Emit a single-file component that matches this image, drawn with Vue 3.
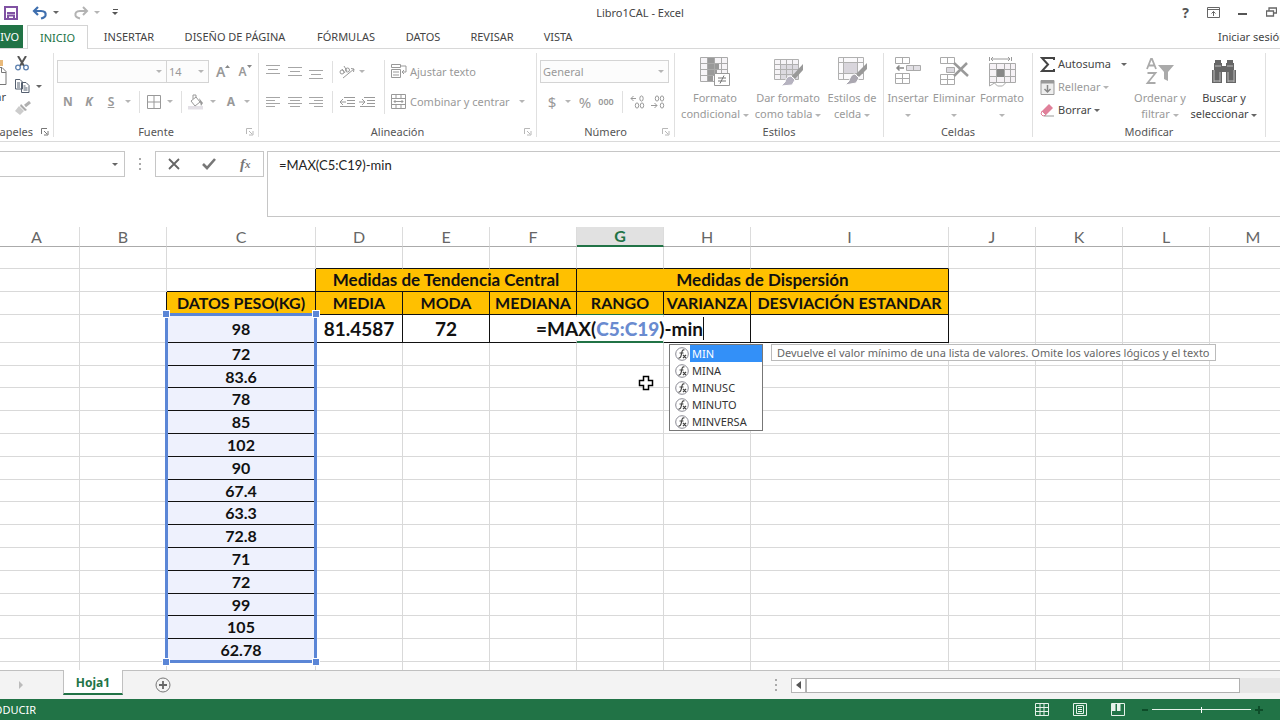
<script setup>
const menuTabs = ['INSERTAR', 'DISEÑO DE PÁGINA', 'FÓRMULAS', 'DATOS', 'REVISAR', 'VISTA']
const columns = ['A', 'B', 'C', 'D', 'E', 'F', 'G', 'H', 'I', 'J', 'K', 'L', 'M']
const weights = ['72', '83.6', '78', '85', '102', '90', '67.4', '63.3', '72.8', '71', '72', '99', '105', '62.78']
const suggestions = ['MIN', 'MINA', 'MINUSC', 'MINUTO', 'MINVERSA']
const vertical = [
  { label: 'Alinear arriba', d: 'M0 1.5h14M2 5.5h10M0 9.5h14' },
  { label: 'Alinear en el medio', d: 'M0 3.5h14M2 7.5h10M0 11.5h14' },
  { label: 'Alinear abajo', d: 'M0 6.5h14M2 10.5h10M0 14.5h14' }
]
const horizontal = [
  { label: 'Alinear a la izquierda', d: 'M0 2.5h14M0 5.5h9M0 8.5h14M0 11.5h9' },
  { label: 'Centrar', d: 'M0 2.5h14M2 5.5h10M0 8.5h14M2 11.5h10' },
  { label: 'Alinear a la derecha', d: 'M0 2.5h14M5 5.5h9M0 8.5h14M5 11.5h9' }
]
</script>

<template>
  <div class="app">
    <header class="title">
      <div class="quick">
        <button aria-label="Guardar"><svg width="14" height="14" viewBox="0 0 14 14"><path d="M1 1h12v12H1z" fill="#fff" stroke="#8052a3" stroke-width="2" /><path d="M3 7h8M4 13V9.500h6V13" fill="none" stroke="#8052a3" stroke-width="2" /></svg></button>
        <button aria-label="Deshacer"><svg width="16" height="14" viewBox="0 0 16 14"><path d="M6 1 2 5l4 4M2.500 5H9c4 0 5 2 4.500 4.500C13 11.500 11 12 9 12.500" fill="none" stroke="#3f6fae" stroke-width="2.200" /></svg></button>
        <i class="caret dark"></i>
        <button aria-label="Rehacer" class="redo"><svg width="16" height="14" viewBox="0 0 16 14"><path d="m10 1 4 4-4 4M13.500 5H7C3 5 2 7 2.500 9.500 3 11.500 5 12 7 12.500" fill="none" stroke="#b3b3b3" stroke-width="2" /></svg></button>
        <i class="caret"></i>
        <button aria-label="Personalizar barra" class="custom"><svg width="7" height="7" viewBox="0 0 7 7"><path d="M1 .5h5" stroke="#555" /><path d="M0 3h6L3 6z" fill="#555" /></svg></button>
      </div>
      <h1>Libro1CAL - Excel</h1>
      <div class="window">
        <button aria-label="Ayuda" class="help">?</button>
        <button aria-label="Opciones de cinta"><svg width="13" height="11" viewBox="0 0 13 11"><path d="M.5.500h12v10H.5zM.5 2.500h12M6.500 9V4.500M4.500 6.500l2-2 2 2" fill="none" stroke="#666" /></svg></button>
        <button aria-label="Minimizar"><svg width="10" height="11" viewBox="0 0 10 11"><path d="M0 7h9" stroke="#555" stroke-width="2" /></svg></button>
        <button aria-label="Restaurar"><svg width="11" height="11" viewBox="0 0 11 11"><path d="M.5 4h7v5h-7zM3 4V1h7.500v5H7.500" fill="none" stroke="#666" stroke-width="1.300" /></svg></button>
      </div>
    </header>

    <nav class="tabs">
      <button class="file">ARCHIVO</button>
      <button class="active">INICIO</button>
      <div class="others"><button v-for="t in menuTabs" :key="t">{{ t }}</button></div>
      <a href="#" class="login">Iniciar sesión</a>
    </nav>

    <section class="ribbon">
      <div class="group clip">
        <div class="body">
          <button class="paste"><svg width="7" height="28" viewBox="0 0 7 28"><path d="M0 1h3v6H0z" fill="#e8b97a" /><path d="M0 8.500h2l4 4v13H0M1.500 9v4.500H6" fill="none" stroke="#777" /></svg><span>Pegar</span></button>
          <div class="clipside">
            <button aria-label="Cortar"><svg width="14" height="15" viewBox="0 0 14 15"><path d="m3 0 6 10M11 0 5 10" stroke="#555" stroke-width="2" /><circle cx="3" cy="11.500" r="2.300" fill="none" stroke="#5b7fae" stroke-width="1.300" /><circle cx="11" cy="11.500" r="2.300" fill="none" stroke="#5b7fae" stroke-width="1.300" /></svg></button>
            <button aria-label="Copiar"><svg width="15" height="14" viewBox="0 0 15 14"><path d="M.5.500H5L7.500 3v7h-7zM2 4h3M2 6h3M2 8h3M6.500 3.500H11l3 3v7H6.500zM8.500 7h2M8.500 9h4M8.500 11h4" fill="#fff" stroke="#556070" /></svg><i class="caret dark"></i></button>
            <button aria-label="Copiar formato"><svg width="16" height="14" viewBox="0 0 16 14"><path d="m15 1-5 4" stroke="#b0b0b0" stroke-width="3" /><path d="m6 3 6 6-2 1-5-5z" fill="#aaa" /><path d="m4 5 5 5-4 4-5-4z" fill="#ccc" /></svg></button>
          </div>
        </div>
        <div class="label">Portapapeles<svg class="launch strong" width="8" height="8" viewBox="0 0 8 8"><path d="M.5 6V.5H6M3 3l3 3M7 3v4H3" fill="none" stroke="currentColor" /></svg></div>
      </div>

      <div class="group font">
        <div class="body rows">
          <div class="row combos">
            <button class="combo" aria-label="Fuente"><span></span><i class="caret"></i></button>
            <button class="combo size" aria-label="Tamaño de fuente"><span>14</span><i class="caret"></i></button>
            <button class="grow" aria-label="Aumentar tamaño">A<svg width="5" height="4" viewBox="0 0 5 4"><path d="M0 3h5L2.500 0z" fill="#888" /></svg></button>
            <button class="grow less" aria-label="Disminuir tamaño">A<svg width="5" height="4" viewBox="0 0 5 4"><path d="M0 0h5L2.500 3z" fill="#888" /></svg></button>
          </div>
          <div class="row fontgrid">
            <button class="b">N</button><button class="b it">K</button><button class="b un">S</button><i class="caret"></i><i class="div"></i>
            <button aria-label="Bordes"><svg width="14" height="14" viewBox="0 0 14 14"><path d="M.5.500h13v13H.5zM7 1v12M1 7h12" fill="none" stroke="#999" /></svg></button><i class="caret"></i><i class="div"></i>
            <button aria-label="Relleno"><svg width="16" height="16" viewBox="0 0 16 16"><path d="M0 12h15v3.500H0z" fill="#e3e0e6" /><path d="m3 7 5-4 4 5-5 4zM5 5V1h3v3" fill="#fff" stroke="#999" /><path d="m11 4 4 5-2 3-1-4z" fill="#999" /></svg></button><i class="caret"></i>
            <button class="b">A</button><i class="caret"></i>
          </div>
        </div>
        <div class="label">Fuente<svg class="launch" width="8" height="8" viewBox="0 0 8 8"><path d="M.5 6V.5H6M3 3l3 3M7 3v4H3" fill="none" stroke="currentColor" /></svg></div>
      </div>

      <div class="group align">
        <div class="body">
          <div class="rows">
            <div class="row aligngrid">
              <button v-for="v in vertical" :key="v.label" :aria-label="v.label"><svg width="14" height="16" viewBox="0 0 14 16"><path :d="v.d" stroke="#a6a6a6" /></svg></button>
              <i class="div"></i>
              <button aria-label="Orientación"><svg width="16" height="14" viewBox="0 0 16 14"><g fill="none" stroke="#999"><circle cx="3" cy="7" r="2" /><path d="m3 4 3 4" /><circle cx="8.500" cy="5" r="2" /><path d="m5 1 3 5M4 13 15 4M12 3.500l3 .5-.5 3" /></g></svg></button>
              <i class="caret"></i>
            </div>
            <div class="row aligngrid">
              <button v-for="h in horizontal" :key="h.label" :aria-label="h.label"><svg width="14" height="14" viewBox="0 0 14 14"><path :d="h.d" stroke="#a6a6a6" /></svg></button>
              <i class="div"></i>
              <button aria-label="Disminuir sangría"><svg width="16" height="12" viewBox="0 0 16 12"><path d="M5 1.500h11M8 4.500h8M8 7.500h8M1 10.500h15M1 6h6M4 3 1 6l3 3" fill="none" stroke="#999" /></svg></button>
              <button aria-label="Aumentar sangría"><svg width="16" height="12" viewBox="0 0 16 12"><path d="M5 1.500h11M8 4.500h8M8 7.500h8M1 10.500h15M0 6h6M3 3l3 3-3 3" fill="none" stroke="#999" /></svg></button>
            </div>
          </div>
          <i class="div tall"></i>
          <div class="rows">
            <div class="row"><button class="wide"><svg width="16" height="15" viewBox="0 0 16 15"><path d="M.5.500h9v3h-9zM.5 5.500h9v8h-9zM2 8h6M2 11h6M10 2h5v6h-4M13 6l-2 2 2 2" fill="none" stroke="#999" /></svg>Ajustar texto</button></div>
            <div class="row"><button class="wide"><svg width="16" height="15" viewBox="0 0 16 15"><path d="M.5.500h14v14H.5zM1 4.500h13M1 10.500h13M5 1v3M10 1v3M5 11v3M10 11v3M3 7.500h9M4.500 6 3 7.500 4.500 9M10.500 6 12 7.500 10.500 9" fill="none" stroke="#999" /></svg>Combinar y centrar</button><i class="caret merge"></i></div>
          </div>
        </div>
        <div class="label">Alineación<svg class="launch" width="8" height="8" viewBox="0 0 8 8"><path d="M.5 6V.5H6M3 3l3 3M7 3v4H3" fill="none" stroke="currentColor" /></svg></div>
      </div>

      <div class="group number">
        <div class="body rows">
          <div class="row"><button class="combo general" aria-label="Formato de número"><span>General</span><i class="caret"></i></button></div>
          <div class="row numgrid">
            <button class="sym">$</button><i class="caret"></i><button class="sym">%</button><button class="mil">000</button><i class="div"></i>
            <button aria-label="Aumentar decimales"><svg width="15" height="14" viewBox="0 0 15 14"><g fill="none" stroke="#999"><path d="M6 3.500H1M3.500 1 1 3.500 3.500 6" /><ellipse cx="11.500" cy="3.500" rx="1.700" ry="2.600" /><ellipse cx="7" cy="10.500" rx="1.700" ry="2.600" /><ellipse cx="12" cy="10.500" rx="1.700" ry="2.600" /></g></svg></button>
            <button aria-label="Disminuir decimales"><svg width="15" height="14" viewBox="0 0 15 14"><g fill="none" stroke="#999"><path d="M1 10.500h6M4.500 8 7 10.500 4.500 13" /><ellipse cx="7" cy="3.500" rx="1.700" ry="2.600" /><ellipse cx="12" cy="3.500" rx="1.700" ry="2.600" /><ellipse cx="12" cy="10.500" rx="1.700" ry="2.600" /></g></svg></button>
          </div>
        </div>
        <div class="label">Número<svg class="launch" width="8" height="8" viewBox="0 0 8 8"><path d="M.5 6V.5H6M3 3l3 3M7 3v4H3" fill="none" stroke="currentColor" /></svg></div>
      </div>

      <div class="group styles">
        <div class="body biggrid">
          <button class="big"><svg width="30" height="30" viewBox="0 0 30 30"><path d="M.5.500h27v24H.5z" fill="#f6f4f7" stroke="#aaa" /><path d="M8 1h6v5H8zM8 7h11v5H8zM8 13h9v5H8zM8 19h5v5H8z" fill="#999" /><path d="M1 6.500h27M1 12.500h27M1 18.500h27M7.500 1v23M14.500 1v23M21.500 1v23" stroke="#aaa" /><path d="M14.500 16.500h15v12h-15z" fill="#fff" stroke="#999" /><path d="M18 21h8M18 24h8M24 18.500l-4 8" stroke="#777" /></svg><span>Formato<br>condicional <i class="caret"></i></span></button>
          <button class="big"><svg width="30" height="30" viewBox="0 0 30 30"><path d="M1.500 2.500h24v20h-24z" fill="#f6f4f7" stroke="#b0b0b0" /><path d="M8 8h17v14H8z" fill="#dcdae0" /><path d="M2 7.500h23M2 12.500h23M2 17.500h23M7.500 3v19M13.500 3v19M19.500 3v19" stroke="#b0b0b0" /><path d="M30 7v6l-8 9-3-3z" fill="#999" /><path d="m18 19 4 4-3 5-11 1 4-4c1-4 3-6 6-6z" fill="#b6b3c0" stroke="#fff" /></svg><span>Dar formato<br>como tabla <i class="caret"></i></span></button>
          <button class="big"><svg width="30" height="30" viewBox="0 0 30 30"><path d="M1.500.500h25v22h-25z" fill="#faf9fb" stroke="#b0b0b0" /><path d="M2 5.500h24M2 16.500h24M6.500 1v21M20.500 1v21" stroke="#b0b0b0" /><path d="M7 6h13v10H7z" fill="#d8d5dc" /><path d="M30 6v6l-8 8-3-3z" fill="#999" /><path d="m18 17 4 4-3 5-11 2 4-4c1-4 3-7 6-7z" fill="#aaa7b0" stroke="#fff" /></svg><span>Estilos de<br>celda <i class="caret"></i></span></button>
        </div>
        <div class="label">Estilos</div>
      </div>

      <div class="group cells">
        <div class="body biggrid">
          <button class="big"><svg width="28" height="30" viewBox="0 0 28 30"><path d="M1.500.500h14v6h-14zM8.500.500v6M1.500 16.500h14v10h-14zM8.500 16.500v10M1.500 21.500h14" fill="#fff" stroke="#aaa" /><path d="M12.500 8.500h14v5h-14zM19.500 8.500v5" fill="#e2e0e5" stroke="#aaa" /><path d="M10 11H3M5.500 8.500 3 11l2.500 2.500" fill="none" stroke="#888" stroke-width="1.500" /></svg><span>Insertar<br><i class="caret"></i></span></button>
          <button class="big"><svg width="30" height="30" viewBox="0 0 30 30"><path d="M1.500.500h14v6h-14zM8.500.500v6M1.500 17.500h14v10h-14zM8.500 17.500v10M1.500 22.500h14" fill="#fff" stroke="#aaa" /><path d="M7.500 10.500h8v5h-8z" fill="#dcdae0" stroke="#aaa" /><path d="m15 6 14 13M28 6 15 19" stroke="#999" stroke-width="2.500" /></svg><span>Eliminar<br><i class="caret"></i></span></button>
          <button class="big"><svg width="30" height="30" viewBox="0 0 30 30"><path d="M2.500 0v4M24.500 0v4M4 2h19M6 0 4 2l2 2M21 0l2 2-2 2" fill="none" stroke="#999" /><path d="M2.500 6.500h26v19h-26z" fill="#f6f2f6" stroke="#aaa" /><path d="M3 12.500h25M3 19.500h25M9.500 7v18M17.500 7v18M23.500 7v18" stroke="#aaa" /><path d="M10 12h7v8h-7z" fill="#888" /><path d="M2.500 25v4l5-3 3 3h5l4-4" fill="none" stroke="#aaa" /></svg><span>Formato<br><i class="caret"></i></span></button>
        </div>
        <div class="label">Celdas</div>
      </div>

      <div class="group edit">
        <div class="body editgrid">
          <div class="stack">
            <button class="on"><svg width="15" height="15" viewBox="0 0 15 15"><path d="M14 3V1H2l6 6.500L2 14h12v-2" fill="none" stroke="#444" stroke-width="2" /></svg>Autosuma<i class="caret dark sum"></i></button>
            <button><svg width="15" height="15" viewBox="0 0 15 15"><path d="M1 .5h13v14H1z" fill="#eee" stroke="#999" /><path d="M1 2h13" stroke="#999" stroke-width="3" /><path d="M7.500 5v7M4.500 9l3 3 3-3" fill="none" stroke="#888" stroke-width="1.500" /></svg>Rellenar<i class="caret"></i></button>
            <button class="on"><svg width="15" height="15" viewBox="0 0 15 15"><path d="m2 8 7-7 4 4-7 7z" fill="#e0809a" /><path d="m2 8-1 3 2 2 3-1z" fill="#fff" stroke="#e0809a" /><path d="M4 13h10" stroke="#999" /></svg>Borrar<i class="caret dark"></i></button>
          </div>
          <button class="big"><svg width="30" height="30" viewBox="0 0 30 30"><path d="m2 12 4-10h1l4 10M3.500 8.500h6M2.500 16h8l-8 10h8" fill="none" stroke="#aaa" stroke-width="1.800" /><path d="M13 8h16l-6 7v9l-4-2v-7z" fill="#aaa" /></svg><span>Ordenar y<br>filtrar <i class="caret"></i></span></button>
          <button class="big on"><svg width="28" height="30" viewBox="0 0 28 30"><path d="M5 3h6v3h1v3h4V6h1V3h6v3h1v7h2v13H16V15h-4v11H2V13h2V6h1z" fill="#666" /><path d="M5 9h6M17 9h6M4 13v12M24 13v12M10 15v10M18 15v10M4 24h6M18 24h6" stroke="#bbb" /></svg><span>Buscar y<br>seleccionar <i class="caret dark"></i></span></button>
        </div>
        <div class="label">Modificar</div>
      </div>
    </section>

    <section class="formula">
      <button class="namebox" aria-label="Cuadro de nombres"><i class="caret dark"></i></button>
      <i class="dots"></i>
      <div class="fxbox">
        <button aria-label="Cancelar"><svg width="12" height="12" viewBox="0 0 12 12"><path d="m1 1 10 10M11 1 1 11" stroke="#666" stroke-width="1.800" /></svg></button>
        <button aria-label="Introducir"><svg width="14" height="12" viewBox="0 0 14 12"><path d="m1 6 4 4 8-9" fill="none" stroke="#777" stroke-width="2.600" /></svg></button>
        <button aria-label="Insertar función" class="fx">f<small>x</small></button>
      </div>
      <textarea aria-label="Barra de fórmulas" spellcheck="false">=MAX(C5:C19)-min</textarea>
    </section>

    <main class="sheet">
      <table>
        <colgroup><col v-for="c in columns" :key="c" :class="'col-' + c"></colgroup>
        <thead><tr><th v-for="c in columns" :key="c" :class="{ sel: c === 'G', first: c === 'A' }">{{ c }}</th></tr></thead>
        <tbody>
          <tr class="short"><td v-for="(c, i) in columns" :key="c" :class="{ kb: i > 2 && i < 9 }"></td></tr>
          <tr>
            <td></td><td></td><td class="kb kr"></td>
            <td class="gold heading kb kr" colspan="3">Medidas de Tendencia Central</td>
            <td class="gold heading kb kr" colspan="3">Medidas de Dispersión</td>
            <td></td><td></td><td></td><td></td>
          </tr>
          <tr>
            <td></td><td class="kr"></td>
            <td v-for="h in ['DATOS PESO(KG)', 'MEDIA', 'MODA', 'MEDIANA', 'RANGO', 'VARIANZA', 'DESVIACIÓN ESTANDAR']" :key="h" class="gold kb kr">{{ h }}</td>
            <td></td><td></td><td></td><td></td>
          </tr>
          <tr class="tallrow">
            <td></td><td></td><td class="data kb">98</td>
            <td class="result kb kr">81.4587</td><td class="result kb kr">72</td><td class="kb"></td>
            <td class="kb editing"><span class="editor">=MAX(<b>C5:C19</b>)-min</span></td>
            <td class="kb kr"></td><td class="kb kr"></td><td></td><td></td><td></td><td></td>
          </tr>
          <tr v-for="(w, r) in weights" :key="r" :class="{ short: r % 5 === 1 }">
            <td></td><td></td><td class="data kb">{{ w }}</td><td v-for="n in 10" :key="n"></td>
          </tr>
          <tr><td v-for="c in columns" :key="c"></td></tr>
        </tbody>
      </table>
      <div class="range"><i></i><i></i><i></i><i></i></div>
      <ul class="menu">
        <li v-for="(s, i) in suggestions" :key="s" :class="{ picked: i === 0 }">
          <svg width="14" height="14" viewBox="0 0 14 14"><circle cx="7" cy="7" r="6.300" fill="#fff" stroke="#8a8a94" /><path d="M9.500 3C7 2 7 5 6.500 7S6 11.500 3.500 11M4.500 6h4M8 8l3 3M11 8l-3 3" fill="none" stroke="#444" stroke-width="1.200" /></svg><span>{{ s }}</span>
        </li>
      </ul>
      <div class="tip" role="tooltip">Devuelve el valor mínimo de una lista de valores. Omite los valores lógicos y el texto</div>
      <svg class="cursor" width="16" height="16" viewBox="0 0 16 16"><path d="M5.500 1.500h5v4h4v5h-4v4h-5v-4h-4v-5h4z" fill="#fff" stroke="#000" stroke-width="1.500" /></svg>
    </main>

    <footer class="bottom">
      <button class="next" aria-label="Hoja siguiente"><svg width="5" height="8" viewBox="0 0 5 8"><path d="M0 0v8l4-4z" fill="#bbb" /></svg></button>
      <button class="sheettab">Hoja1</button>
      <button class="add" aria-label="Hoja nueva"><svg width="16" height="16" viewBox="0 0 16 16"><circle cx="8" cy="8" r="7" fill="none" stroke="#777" /><path d="M8 4v8M4 8h8" stroke="#666" stroke-width="1.800" /></svg></button>
      <i class="dots"></i>
      <div class="scroll"><button aria-label="Desplazar a la izquierda"><svg width="5" height="8" viewBox="0 0 5 8"><path d="M5 0v8L0 4z" fill="#555" /></svg></button><div class="thumb"></div></div>
    </footer>
    <div class="status">
      <span class="mode">INTRODUCIR</span>
      <div class="views">
        <button aria-label="Normal"><svg width="14" height="13" viewBox="0 0 14 13"><path d="M.5.500h13v12H.5zM1 4.500h12M1 8.500h12M5 1v11M9 1v11" fill="none" stroke="#e6f2ea" /></svg></button>
        <button aria-label="Diseño de página"><svg width="14" height="13" viewBox="0 0 14 13"><path d="M.5.500h13v12H.5zM3.500 2.500h7v8h-7zM5 4.500h4M5 6.500h4M5 8.500h4" fill="none" stroke="#e6f2ea" /></svg></button>
        <button aria-label="Salto de página"><svg width="14" height="13" viewBox="0 0 14 13"><path d="M.5.500h13v12H.5z" fill="none" stroke="#e6f2ea" /><path d="M1 1h3.500v7H1zM6 1h3.500v7H6z" fill="#e6f2ea" /></svg></button>
      </div>
      <div class="zoom"><svg width="6" height="6" viewBox="0 0 6 6"><path d="M0 3h6" stroke="#0d4d29" stroke-width="2" /></svg><input type="range" aria-label="Zoom" min="0" max="100" value="50"><svg width="8" height="8" viewBox="0 0 8 8"><path d="M0 4h8M4 0v8" stroke="#0d4d29" stroke-width="2" /></svg></div>
    </div>
  </div>
</template>

<style>
body { margin: 0; }
</style>

<style scoped>
* { box-sizing: border-box; }
.app { height: 100vh; display: flex; flex-direction: column; overflow: hidden; background: #fff; color: #444; font: 11px/16px "Noto Sans", "Open Sans", sans-serif; }
button { border: 0; padding: 0; margin: 0; background: none; font: inherit; color: inherit; white-space: nowrap; display: flex; align-items: center; justify-content: center; }
svg { flex: none; display: block; }
.caret { display: inline-block; flex: none; width: 0; height: 0; border: 3px solid transparent; border-top-color: #b5b5b5; border-bottom: 0; vertical-align: middle; }
.caret.dark { border-top-color: #666; }

.title { height: 25px; flex: none; display: grid; grid-template-columns: 1fr auto 1fr; align-items: center; }
.title h1 { margin: 0; font-size: 11px; font-weight: 400; }
.quick { display: flex; align-items: center; padding-left: 4px; height: 22px; }
.quick button + button { margin-left: 14px; }
.quick .caret { margin-left: 5px; }
.quick .redo { margin-left: 14px; }
.quick .custom { margin-left: 12px; }
.window { display: flex; justify-content: flex-end; align-items: center; gap: 18px; padding-right: 3px; height: 22px; }
.help { font-size: 14px; font-weight: 700; color: #555; }

.tabs { height: 24px; flex: none; display: flex; border-bottom: 1px solid #d8d8d8; }
.file { width: 23px; justify-content: flex-end; padding-right: 4px; overflow: hidden; background: #217346; color: #fff; margin-right: 4px; }
.active { width: 61px; margin-bottom: -1px; height: 24px; border: 1px solid #d4d4d4; border-bottom: 0; background: #fff; color: #217346; }
.others { display: grid; grid-template-columns: 82px 130px 92px 62px 76px 56px; }
.login { margin-left: auto; margin-right: -6px; color: #444; text-decoration: none; line-height: 24px; white-space: nowrap; }

.ribbon { height: 93px; flex: none; display: flex; border-bottom: 1px solid #dadada; padding: 4px 0 4px; color: #999; }
.group { flex: none; border-right: 1px solid #e0e0e0; display: flex; flex-direction: column; }
.group .body { flex: 1; display: flex; }
.label { position: relative; height: 16px; margin-bottom: -3px; text-align: center; color: #555; line-height: 16px; }
.launch { position: absolute; right: 4px; bottom: 4px; color: #b8b8b8; }
.launch.strong { color: #777; }
.clip { width: 54px; }
.clip .label { display: flex; justify-content: flex-end; padding-right: 20px; overflow: hidden; }
.paste { width: 8px; flex-direction: column; align-items: flex-start; justify-content: flex-start; padding-top: 6px; color: #444; }
.paste span { width: 6px; display: flex; justify-content: flex-end; line-height: 20px; }
.clipside { display: flex; flex-direction: column; gap: 8px; padding: 3px 0 0 7px; }
.clipside button { justify-content: flex-start; gap: 6px; }
.body.rows { padding-left: 3px; }
.rows { flex-direction: column; display: flex; gap: 7px; padding-top: 7px; }
.row { height: 23px; display: flex; align-items: center; }
.font { width: 205px; }
.combo { height: 23px; width: 110px; border: 1px solid #d4d4d4; background: #fcfcfc; justify-content: space-between; padding: 0 4px 0 2px; }
.combo.size { width: 43px; margin-left: -1px; }
.combo.general { width: 129px; }
.grow { margin-left: 7px; font-size: 14px; font-weight: 600; align-items: center; }
.grow svg { margin-top: -10px; }
.grow.less { margin-left: 8px; font-size: 12px; }
.fontgrid { display: grid; grid-template-columns: 22px 20px 24px 10px 12px 18px 14px 8px 22px 12px 24px 8px; justify-items: center; }
.b { font-size: 12px; font-weight: 700; }
.it { font-style: italic; }
.un { text-decoration: underline; font-weight: 600; }
.div { width: 1px; height: 22px; background: #e0e0e0; }
.align { width: 278px; }
.align .body > .rows:first-child { margin-left: 3px; }
.aligngrid { display: grid; grid-template-columns: 22px 22px 20px 12px 18px 22px; justify-items: center; }
.aligngrid .caret { justify-self: start; margin-left: 3px; }
.div.tall { height: 54px; margin: 7px 6px 0; }
.wide { gap: 3px; }
.merge { margin-left: 9px; }
.number { width: 138px; }
.numgrid { display: grid; grid-template-columns: 24px 8px 26px 16px 16px 14px 26px; justify-items: center; }
.sym { font-size: 15px; }
.mil { font-size: 9px; font-weight: 600; }
.group .biggrid, .group .editgrid { display: grid; align-items: start; }
.big { flex-direction: column; padding-top: 4px; line-height: 16px; }
.big svg { margin-bottom: 3px; }
.big span { text-align: center; }
.styles { width: 209px; }
.styles .biggrid { grid-template-columns: 74px 72px 56px; padding-left: 3px; }
.cells { width: 149px; }
.cells .biggrid { grid-template-columns: 46px 46px 50px; padding-left: 1px; }
.edit { width: 233px; }
.edit .editgrid { grid-template-columns: 96px 56px 72px; padding-left: 3px; }
.stack { display: flex; flex-direction: column; gap: 7px; padding: 3px 0 0 4px; }
.stack button { justify-content: flex-start; gap: 3px; height: 16px; }
.sum { margin-left: 7px; }
.on { color: #444; }

.formula { flex: none; height: 75px; padding: 9px 0 0; display: flex; align-items: flex-start; }
.namebox { width: 125px; height: 26px; border: 1px solid #c6c6c6; border-left: 0; justify-content: flex-end; padding-right: 6px; }
.dots { width: 2px; height: 12px; margin: 7px 14px 0; background: repeating-linear-gradient(#aaa 0 2px, transparent 2px 5px); }
.fxbox { width: 109px; height: 26px; border: 1px solid #c6c6c6; display: grid; grid-template-columns: repeat(3, 1fr); margin-right: 3px; }
.fx { font: italic 700 15px/16px "Liberation Serif", serif; color: #777; }
.fx small { font-size: 11px; }
textarea { flex: 1; height: 66px; border: 1px solid #c6c6c6; border-right: 0; padding: 3px 11px; margin: 0; resize: none; outline: 0; color: #222; font: 13px/20px Lato, sans-serif; }

.sheet { position: relative; flex: 1; min-height: 0; overflow: hidden; margin-top: 2px; padding-top: 8px; }
table { table-layout: fixed; border-spacing: 0; width: 1297px; color: #111; font: 700 16px/18px Lato, sans-serif; }
.col-A { width: 80px; }
.col-B, .col-D, .col-E, .col-F, .col-G, .col-H, .col-J, .col-K, .col-L, .col-M { width: 87px; }
.col-C { width: 149px; }
.col-I { width: 198px; }
th { height: 20px; padding: 0; font-weight: 400; color: #666; border-right: 1px solid #dcdcdc; border-bottom: 1px solid #ababab; }
th.first { padding-right: 6px; }
th.sel { background: #e1e1e1; color: #217346; font-weight: 700; border-bottom: 2px solid #217346; }
td { height: 23px; padding: 0; text-align: center; white-space: nowrap; line-height: 18px; border-right: 1px solid #d9d9d9; border-bottom: 1px solid #d9d9d9; }
.short td { height: 22px; }
.tallrow td { height: 28px; }
.gold { background: #ffc000; }
.heading { font-size: 17px; }
td.kb { border-bottom-color: #111; }
td.kr { border-right-color: #111; }
.data { background: #eef1fd; }
.tallrow .result { font-size: 19px; }
td.editing { position: relative; border-bottom-color: #217346; box-shadow: inset 0 -1px #217346, 0 -1px #217346; }
.editor { position: absolute; right: -41px; top: 2px; line-height: 23px; font-size: 19px; background: #fff; border-right: 1px solid #111; z-index: 1; }
.editor b { color: #6a8bd0; }
.range { position: absolute; left: 165px; top: 94px; width: 152px; height: 350px; border: 3px solid #5b86d6; }
.range i { position: absolute; width: 6px; height: 6px; background: #5b86d6; border: 1px solid #fff; box-sizing: content-box; }
.range i:nth-child(1) { left: -6px; top: -6px; }
.range i:nth-child(2) { right: -6px; top: -6px; }
.range i:nth-child(3) { left: -6px; bottom: -6px; }
.range i:nth-child(4) { right: -6px; bottom: -6px; }
.menu { position: absolute; left: 669px; top: 125px; width: 94px; margin: 0; padding: 0; list-style: none; border: 1px solid #777; background: #fff; color: #333; z-index: 2; }
.menu li { height: 17px; display: flex; align-items: center; padding-left: 5px; }
.menu span { flex: 1; padding-left: 2px; margin-left: 1px; line-height: 17px; }
.picked span { background: #3390f8; color: #fff; }
.tip { position: absolute; left: 771px; top: 125px; padding: 0 5px; height: 17px; line-height: 15px; border: 1px solid #bbb; background: #fff; color: #666; white-space: nowrap; }
.cursor { position: absolute; left: 638px; top: 156px; }

.bottom { flex: none; height: 29px; background: #f3f3f3; border-top: 1px solid #c0c0c0; display: flex; align-items: center; }
.next { width: 63px; justify-content: flex-end; padding-right: 39px; }
.sheettab { align-self: flex-start; margin-top: -1px; width: 60px; height: 25px; padding-top: 3px; background: #fff; border: 1px solid #c0c0c0; border-top: 0; border-bottom: 2px solid #217346; color: #217346; font-size: 12px; font-weight: 700; }
.add { margin-left: 32px; }
.bottom .dots { margin: 0 14px 0 auto; }
.scroll { flex: none; width: 38.2%; height: 15px; background: #e6e6e6; display: flex; }
.scroll button { width: 15px; border: 1px solid #b5b5b5; background: #fff; }
.thumb { width: 434px; border: 1px solid #b0b0b0; background: #fff; }
.status { flex: none; height: 21px; background: #217346; color: #fff; display: flex; align-items: center; }
.mode { width: 36px; display: flex; justify-content: flex-end; overflow: hidden; }
.views { margin-left: auto; display: flex; gap: 24px; }
.zoom { display: flex; align-items: center; gap: 4px; margin: 0 17px; }
input { appearance: none; width: 99px; height: 11px; margin: 0; background: linear-gradient(#e6f2ea, #e6f2ea) center / 100% 1px no-repeat; }
input::-webkit-slider-thumb { appearance: none; width: 1px; height: 6px; background: #fff; }
</style>
